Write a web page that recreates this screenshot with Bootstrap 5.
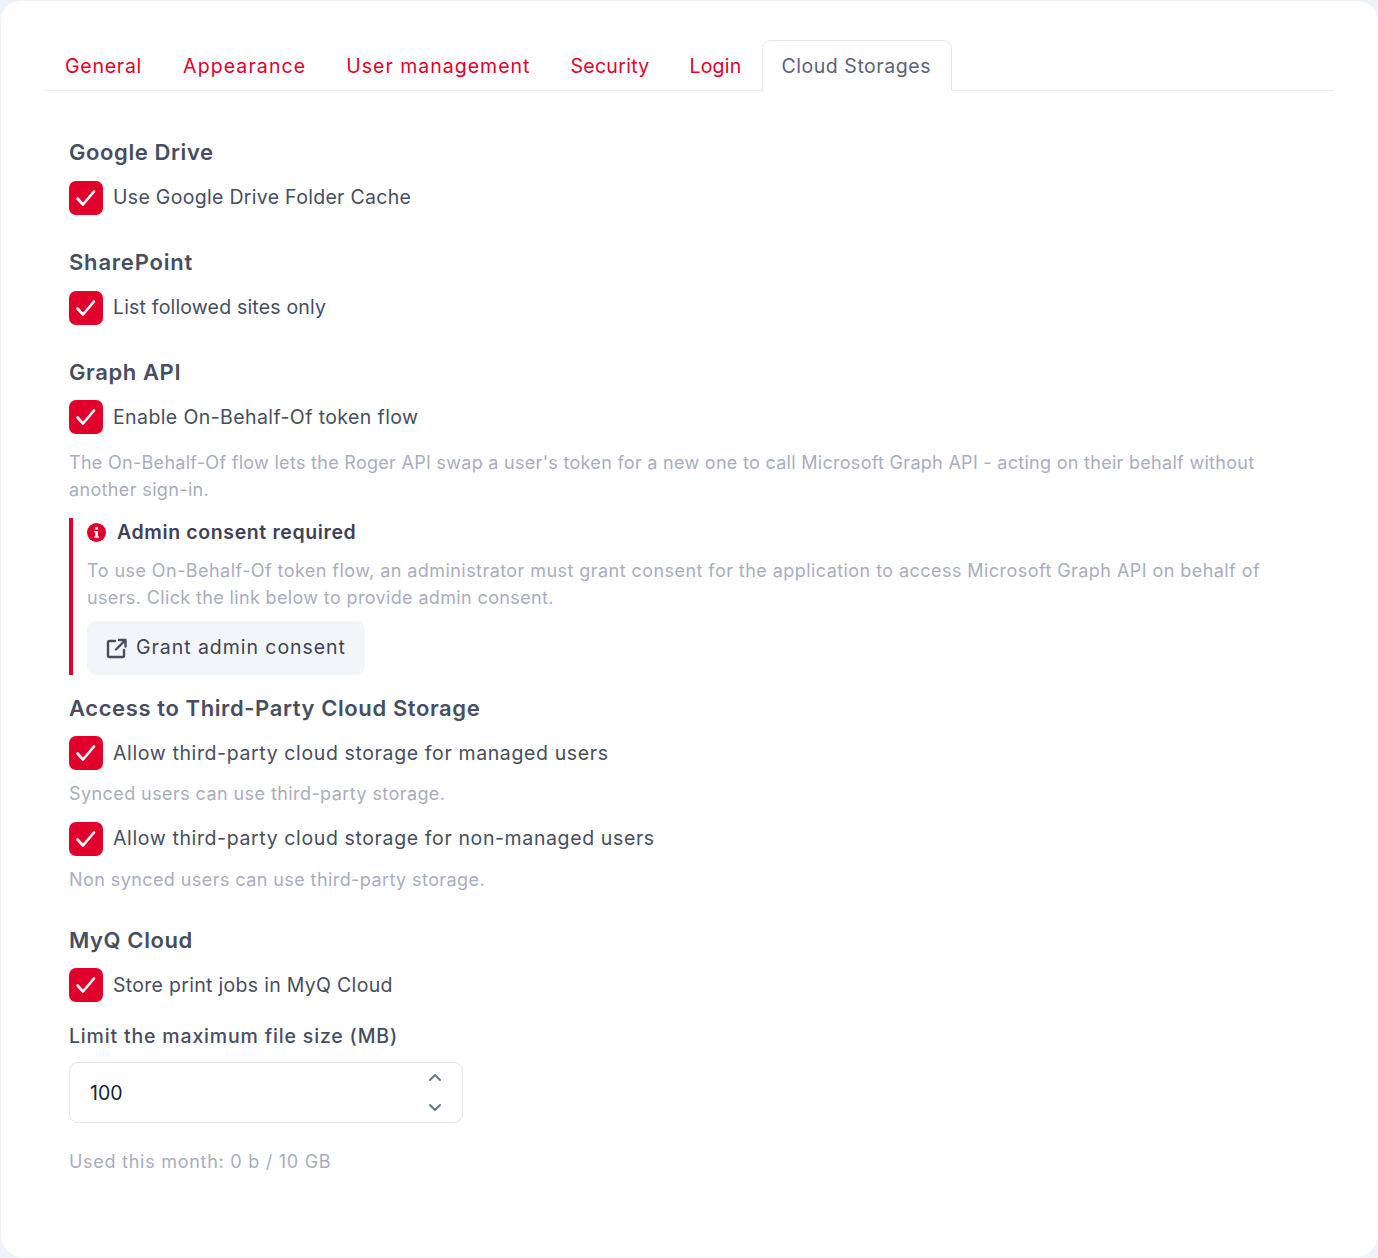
<!DOCTYPE html>
<html lang="en">
<head>
  <meta charset="UTF-8">
  <title>Cloud Storages settings</title>
  <link href="https://cdn.jsdelivr.net/npm/bootstrap@5.3.0/dist/css/bootstrap.min.css" rel="stylesheet">
  <style>
    body { background: #eef3f9; font-family: Inter, "Liberation Sans", sans-serif; color: #464e5f; font-size: 19.5px; }
    .settings-panel { background: #fff; margin: 1px 0 0 1px; border-radius: 20px 20px 24px 24px; padding: 39px 44px 0 43px; height: 1257px; }
    .nav-tabs { --bs-nav-tabs-border-color: #eceef5; --bs-nav-tabs-border-radius: 9px; padding-left: 0; }
    .nav-tabs .nav-link { color: #e1002b; padding: 0 20px; height: 51px; line-height: 51px; margin-right: 0; font-size: 19.5px; }
    .nav-tabs .nav-link.active { color: #5e6278; border-color: #e4e6ef #e4e6ef #fff; }
    .nav-tabs .nav-item:nth-child(1) .nav-link { letter-spacing: .75px; padding-right: 19px; }
    .nav-tabs .nav-item:nth-child(2) .nav-link { letter-spacing: 1.1px; padding-right: 18px; }
    .nav-tabs .nav-item:nth-child(3) .nav-link { letter-spacing: 1px; padding-right: 18px; }
    .nav-tabs .nav-item:nth-child(4) .nav-link { letter-spacing: .3px; padding-right: 18px; }
    .nav-tabs .nav-item:nth-child(5) .nav-link { letter-spacing: .2px; padding-right: 20px; }
    .nav-tabs .nav-item:nth-child(6) .nav-link { letter-spacing: .55px; padding: 0 20px 0 18px; }
    .tab-body { padding: 47px 0 0 25px; }
    .group-title { font-size: 22px; font-weight: 600; line-height: 28px; margin: 0 0 15px; color: #464e5f; letter-spacing: .6px; }
    .title-close { margin-bottom: 14px; }
    .title-wide { letter-spacing: .8px; }
    .form-check { display: flex; align-items: center; gap: 10px; min-height: 34px; padding: 0; margin: 0; }
    .form-check .form-check-input { width: 34px; height: 34px; margin: 0; float: none; border-radius: 7px; border: 0; background-color: #e1002b; flex: none; background-size: 34px; }
    .form-check .form-check-input:checked[type=checkbox] { --bs-form-check-bg-image: url("data:image/svg+xml,%3csvg xmlns='http://www.w3.org/2000/svg' viewBox='0 0 34 34'%3e%3cpath fill='none' stroke='%23fff' stroke-linecap='round' stroke-linejoin='round' stroke-width='2.6' d='M8.500 17.500l5.500 6 11-13'/%3e%3c/svg%3e"); }
    .form-check-label { line-height: 32px; padding-bottom: 2px; letter-spacing: .3px; }
    .label-low { padding-bottom: 0; }
    .label-wide { letter-spacing: .62px; }
    .label-narrow { letter-spacing: .18px; }
    .label-mid { letter-spacing: .4px; }
    .hint { color: #a9adbf; font-size: 18px; line-height: 27px; margin: 0; letter-spacing: .36px; }
    .hint-tight { letter-spacing: .29px; }
    .hint-loose { letter-spacing: .44px; }
    .hint-short { letter-spacing: .42px; }
    .hint-top { margin-top: 15px; }
    .hint-sub { margin-top: 10px; }
    .gap-section { margin-top: 33px; }
    .consent-box { border-left: 4px solid #e1002b; padding: 1px 0 0 14px; margin: 15px 0 19px; }
    .consent-title { font-weight: 600; line-height: 27px; font-size: 19.5px; color: #3f4254; margin-bottom: 11px; gap: 11px; letter-spacing: .62px; }
    .grant-btn { --bs-btn-bg: #f3f6f9; --bs-btn-border-color: #f3f6f9; --bs-btn-hover-bg: #e9edf2; --bs-btn-color: #3f4254; --bs-btn-font-size: 19.5px; --bs-btn-border-radius: 9px; height: 54px; padding: 0 18px; margin-top: 10px; gap: 9px; letter-spacing: .95px; }
    .check-next { margin-top: 15px; }
    .size-label { font-weight: 500; line-height: 27px; margin: 21px 0 12px; color: #464e5f; display: block; letter-spacing: .83px; }
    .size-field { width: 394px; }
    .size-field .form-control { height: 61px; border-radius: 9px; border-color: #e4e6ef; padding: 0 20px; font-size: 19.5px; color: #181c32; -moz-appearance: textfield; }
    .size-field .form-control::-webkit-inner-spin-button { display: none; }
    .spin-icon { position: absolute; right: 20px; color: #5f7a8a; }
    .spin-up { top: 10px; }
    .spin-down { top: 39px; }
    .used-line { margin-top: 25px; letter-spacing: .73px; }
  </style>
</head>
<body>
  <div class="settings-panel">
    <ul class="nav nav-tabs">
      <li class="nav-item"><a class="nav-link" href="#">General</a></li>
      <li class="nav-item"><a class="nav-link" href="#">Appearance</a></li>
      <li class="nav-item"><a class="nav-link" href="#">User management</a></li>
      <li class="nav-item"><a class="nav-link" href="#">Security</a></li>
      <li class="nav-item"><a class="nav-link" href="#">Login</a></li>
      <li class="nav-item"><a class="nav-link active" href="#">Cloud Storages</a></li>
    </ul>

    <div class="tab-body">
      <h5 class="group-title">Google Drive</h5>
      <div class="form-check">
        <input class="form-check-input" type="checkbox" id="c1" checked>
        <label class="form-check-label" for="c1">Use Google Drive Folder Cache</label>
      </div>

      <h5 class="group-title title-wide gap-section">SharePoint</h5>
      <div class="form-check">
        <input class="form-check-input" type="checkbox" id="c2" checked>
        <label class="form-check-label label-narrow" for="c2">List followed sites only</label>
      </div>

      <h5 class="group-title title-close gap-section">Graph API</h5>
      <div class="form-check">
        <input class="form-check-input" type="checkbox" id="c3" checked>
        <label class="form-check-label label-low label-mid" for="c3">Enable On-Behalf-Of token flow</label>
      </div>
      <p class="hint hint-top"><span class="hint-tight">The On-Behalf-Of flow lets the Roger API swap a user's token for a new one to call Microsoft Graph API - acting on their behalf without</span><br>another sign-in.</p>

      <div class="consent-box">
        <div class="consent-title d-flex align-items-center">
          <svg width="19" height="19" viewBox="0 0 19 19"><circle cx="9.500" cy="9.500" r="9.500" fill="#e1002b"/><rect x="8.200" y="4" width="2.800" height="2.600" rx=".6" fill="#fff"/><path d="M7.300 8h3.600v5.200h1v1.600H7.300v-1.600h1V9.600h-1z" fill="#fff"/></svg>
          <span>Admin consent required</span>
        </div>
        <p class="hint"><span class="hint-loose">To use On-Behalf-Of token flow, an administrator must grant consent for the application to access Microsoft Graph API on behalf of</span><br>users. Click the link below to provide admin consent.</p>
        <a class="btn grant-btn d-inline-flex align-items-center" href="#">
          <svg width="21" height="21" viewBox="0 0 21 21" fill="none" stroke="#464e5f" stroke-width="2.400" stroke-linecap="round" stroke-linejoin="round"><path d="M9 3H3.500A1.500 1.500 0 0 0 2 4.500v13A1.500 1.500 0 0 0 3.500 19h13a1.500 1.500 0 0 0 1.500-1.500V12"/><path d="M13 2h6.500v6.500M19.500 2L10 11.500"/></svg>
          <span>Grant admin consent</span>
        </a>
      </div>

      <h5 class="group-title title-close">Access to Third-Party Cloud Storage</h5>
      <div class="form-check">
        <input class="form-check-input" type="checkbox" id="c4" checked>
        <label class="form-check-label label-low label-wide" for="c4">Allow third-party cloud storage for managed users</label>
      </div>
      <p class="hint hint-short hint-sub">Synced users can use third-party storage.</p>
      <div class="form-check check-next">
        <input class="form-check-input" type="checkbox" id="c5" checked>
        <label class="form-check-label label-wide" for="c5">Allow third-party cloud storage for non-managed users</label>
      </div>
      <p class="hint hint-short hint-sub">Non synced users can use third-party storage.</p>

      <h5 class="group-title title-close gap-section">MyQ Cloud</h5>
      <div class="form-check">
        <input class="form-check-input" type="checkbox" id="c6" checked>
        <label class="form-check-label label-low" for="c6">Store print jobs in MyQ Cloud</label>
      </div>

      <label class="size-label" for="maxSize">Limit the maximum file size (MB)</label>
      <div class="size-field position-relative">
        <input class="form-control" type="number" id="maxSize" value="100">
        <svg class="spin-icon spin-up" width="16" height="12" viewBox="0 0 16 12" fill="none" stroke="currentColor" stroke-width="2" stroke-linecap="round" stroke-linejoin="round"><path d="M3 8l5-5 5 5"/></svg>
        <svg class="spin-icon spin-down" width="16" height="12" viewBox="0 0 16 12" fill="none" stroke="currentColor" stroke-width="2" stroke-linecap="round" stroke-linejoin="round"><path d="M3 4l5 5 5-5"/></svg>
      </div>
      <p class="hint used-line">Used this month: 0 b / 10 GB</p>
    </div>
  </div>
  <script src="https://cdn.jsdelivr.net/npm/bootstrap@5.3.0/dist/js/bootstrap.bundle.min.js"></script>
</body>
</html>
